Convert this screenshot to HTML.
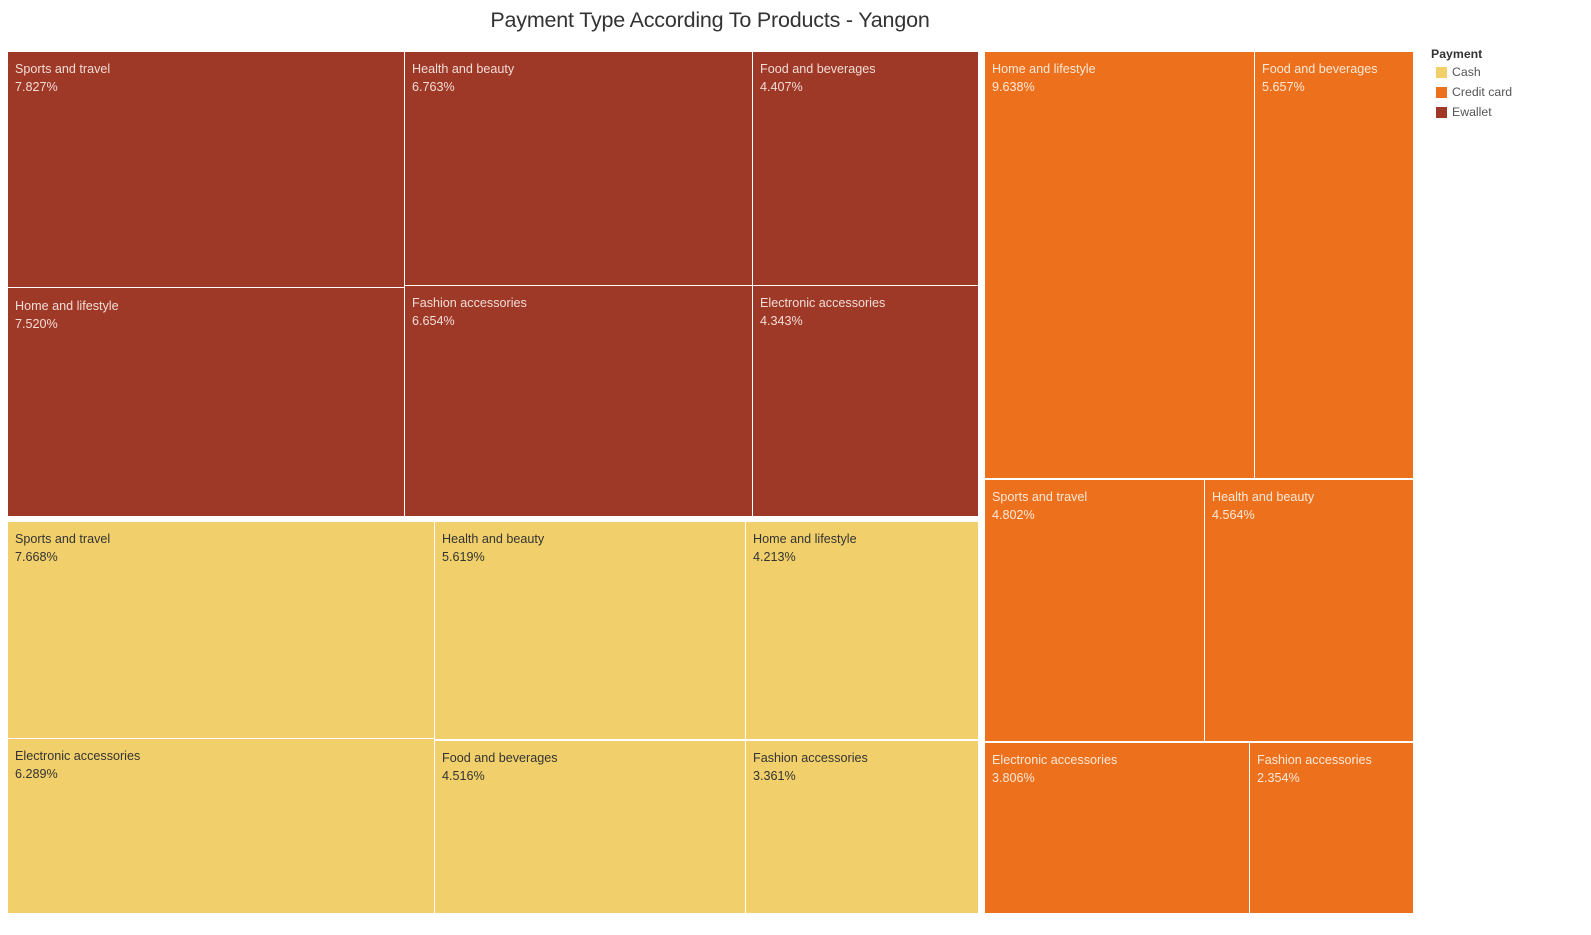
<!DOCTYPE html>
<html><head><meta charset="utf-8"><style>
body{margin:0;width:1591px;height:935px;background:#fff;position:relative;font-family:"Liberation Sans",sans-serif;overflow:hidden}
.t{position:absolute;left:460px;top:8px;width:500px;text-align:center;font-size:21.5px;color:#333;white-space:nowrap;letter-spacing:-0.2px}
.b{position:absolute;box-sizing:border-box;font-size:12.6px;line-height:18px;padding:8px 0 0 7px;white-space:nowrap}
.e{background:#9e3827;color:#f2dcd6}
.c{background:#ed711c;color:#fde8d8}
.k{background:#f1d06b;color:#333}
.lg{position:absolute;left:1431px;font-size:12.3px;color:#555}
.sw{position:absolute;left:1436px;width:11px;height:11px}
</style></head><body>
<div class="t">Payment Type According To Products - Yangon</div>

<div class="b e" style="left:8px;top:52px;width:396px;height:235px">Sports and travel<br>7.827%</div>
<div class="b e" style="left:405px;top:52px;width:347px;height:233px">Health and beauty<br>6.763%</div>
<div class="b e" style="left:753px;top:52px;width:225px;height:233px">Food and beverages<br>4.407%</div>
<div class="b e" style="left:8px;top:288px;width:396px;height:228px;padding-top:9px">Home and lifestyle<br>7.520%</div>
<div class="b e" style="left:405px;top:286px;width:347px;height:230px">Fashion accessories<br>6.654%</div>
<div class="b e" style="left:753px;top:286px;width:225px;height:230px">Electronic accessories<br>4.343%</div>

<div class="b k" style="left:8px;top:522px;width:426px;height:216px">Sports and travel<br>7.668%</div>
<div class="b k" style="left:435px;top:522px;width:310px;height:217px">Health and beauty<br>5.619%</div>
<div class="b k" style="left:746px;top:522px;width:232px;height:217px">Home and lifestyle<br>4.213%</div>
<div class="b k" style="left:8px;top:739px;width:426px;height:174px">Electronic accessories<br>6.289%</div>
<div class="b k" style="left:435px;top:741px;width:310px;height:172px">Food and beverages<br>4.516%</div>
<div class="b k" style="left:746px;top:741px;width:232px;height:172px">Fashion accessories<br>3.361%</div>

<div class="b c" style="left:985px;top:52px;width:269px;height:426px">Home and lifestyle<br>9.638%</div>
<div class="b c" style="left:1255px;top:52px;width:158px;height:426px">Food and beverages<br>5.657%</div>
<div class="b c" style="left:985px;top:480px;width:219px;height:261px">Sports and travel<br>4.802%</div>
<div class="b c" style="left:1205px;top:480px;width:208px;height:261px">Health and beauty<br>4.564%</div>
<div class="b c" style="left:985px;top:743px;width:264px;height:170px">Electronic accessories<br>3.806%</div>
<div class="b c" style="left:1250px;top:743px;width:163px;height:170px">Fashion accessories<br>2.354%</div>

<div class="lg" style="top:47px;color:#333;font-weight:bold">Payment</div>
<div class="sw" style="top:67px;background:#f1d06b"></div><div class="lg" style="left:1452px;top:65px">Cash</div>
<div class="sw" style="top:87px;background:#ed711c"></div><div class="lg" style="left:1452px;top:85px">Credit card</div>
<div class="sw" style="top:107px;background:#9e3827"></div><div class="lg" style="left:1452px;top:105px">Ewallet</div>
</body></html>
